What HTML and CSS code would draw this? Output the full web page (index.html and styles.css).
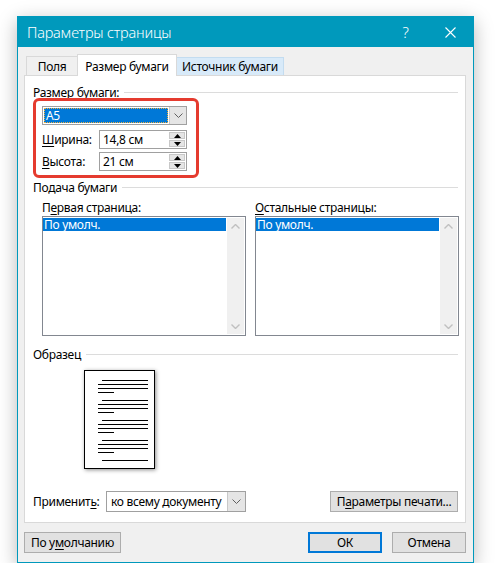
FILE: index.html
```html
<!DOCTYPE html>
<html lang="ru">
<head>
<meta charset="utf-8">
<title>Параметры страницы</title>
<link rel="stylesheet" href="styles.css">
</head>
<body>
<div class="window">
  <div class="titlebar">
    <span class="title">Параметры страницы</span>
    <span class="tb-btn">?</span>
    <span class="tb-btn"><svg width="11" height="11" viewBox="0 0 11 11"><path d="M0.5 0.5L10.5 10.5M10.5 0.5L0.5 10.5" stroke="#fff" stroke-width="1.1" fill="none"/></svg></span>
  </div>
  <div class="body">
    <div class="tabs">
      <div class="tab tab-fields">Поля</div>
      <div class="tab tab-active">Размер бумаги</div>
      <div class="tab tab-hover">Источник бумаги</div>
    </div>
    <div class="panel">
      <div class="group-head"><span>Размер <u>б</u>умаги:</span></div>
      <div class="highlight">
        <div class="combo combo-size">
          <div class="combo-field"><span class="selection">A5</span></div>
          <div class="drop"><svg width="9" height="5" viewBox="0 0 9 5"><path d="M0.5 0.5L4.5 4.5L8.5 0.5" stroke="#606060" fill="none"/></svg></div>
        </div>
        <div class="field-row">
          <span class="field-label"><u>Ш</u>ирина:</span>
          <div class="spin">
            <span class="spin-value">14,8 см</span>
            <div class="spin-btns">
              <span class="spin-btn"><svg width="7" height="4" viewBox="0 0 7 4"><path d="M0 4L3.5 0L7 4Z" fill="#000"/></svg></span>
              <span class="spin-btn"><svg width="7" height="4" viewBox="0 0 7 4"><path d="M0 0L3.5 4L7 0Z" fill="#000"/></svg></span>
            </div>
          </div>
        </div>
        <div class="field-row field-row-2">
          <span class="field-label"><u>В</u>ысота:</span>
          <div class="spin">
            <span class="spin-value">21 см</span>
            <div class="spin-btns">
              <span class="spin-btn"><svg width="7" height="4" viewBox="0 0 7 4"><path d="M0 4L3.5 0L7 4Z" fill="#000"/></svg></span>
              <span class="spin-btn"><svg width="7" height="4" viewBox="0 0 7 4"><path d="M0 0L3.5 4L7 0Z" fill="#000"/></svg></span>
            </div>
          </div>
        </div>
      </div>

      <div class="group-head group-head-2"><span>Подача бумаги</span></div>
      <div class="sources">
        <div class="source-col">
          <div class="col-label">П<u>е</u>рвая страница:</div>
          <div class="listbox">
            <div class="list-items"><div class="list-item">По умолч.</div></div>
            <div class="scrollbar">
              <svg width="9" height="5" viewBox="0 0 9 5"><path d="M0.5 4.5L4.5 0.5L8.5 4.5" stroke="#c0c0c0" stroke-width="1.4" fill="none"/></svg>
              <svg width="9" height="5" viewBox="0 0 9 5"><path d="M0.5 0.5L4.5 4.5L8.5 0.5" stroke="#c0c0c0" stroke-width="1.4" fill="none"/></svg>
            </div>
          </div>
        </div>
        <div class="source-col">
          <div class="col-label"><u>О</u>стальные страницы:</div>
          <div class="listbox">
            <div class="list-items"><div class="list-item">По умолч.</div></div>
            <div class="scrollbar">
              <svg width="9" height="5" viewBox="0 0 9 5"><path d="M0.5 4.5L4.5 0.5L8.5 4.5" stroke="#c0c0c0" stroke-width="1.4" fill="none"/></svg>
              <svg width="9" height="5" viewBox="0 0 9 5"><path d="M0.5 0.5L4.5 4.5L8.5 0.5" stroke="#c0c0c0" stroke-width="1.4" fill="none"/></svg>
            </div>
          </div>
        </div>
      </div>

      <div class="group-head group-head-3"><span>Образец</span></div>
      <div class="sample">
        <svg width="69" height="97" viewBox="0 0 69 97">
          <g fill="#000">
            <rect x="17" y="9" width="46" height="1"/>
            <rect x="13" y="13" width="50" height="1"/>
            <rect x="13" y="17" width="50" height="1"/>
            <rect x="13" y="21" width="16" height="1"/>
            <rect x="17" y="29" width="46" height="1"/>
            <rect x="13" y="33" width="50" height="1"/>
            <rect x="13" y="37" width="50" height="1"/>
            <rect x="13" y="41" width="16" height="1"/>
            <rect x="17" y="49" width="46" height="1"/>
            <rect x="13" y="53" width="50" height="1"/>
            <rect x="13" y="57" width="50" height="1"/>
            <rect x="13" y="61" width="16" height="1"/>
            <rect x="17" y="69" width="46" height="1"/>
            <rect x="13" y="73" width="50" height="1"/>
            <rect x="13" y="77" width="50" height="1"/>
            <rect x="13" y="81" width="16" height="1"/>
            <rect x="17" y="89" width="46" height="1"/>
          </g>
        </svg>
      </div>

      <div class="apply-row">
        <span class="apply-label">Применит<u>ь</u>:</span>
        <div class="combo combo-apply">
          <div class="combo-field">ко всему документу</div>
          <div class="drop"><svg width="9" height="5" viewBox="0 0 9 5"><path d="M0.5 0.5L4.5 4.5L8.5 0.5" stroke="#606060" fill="none"/></svg></div>
        </div>
        <span class="spacer"></span>
        <button class="btn btn-print">П<u>а</u>раметры печати...</button>
      </div>
    </div>

    <div class="footer">
      <button class="btn btn-default">По у<u>м</u>олчанию</button>
      <span class="spacer"></span>
      <button class="btn btn-ok">ОК</button>
      <button class="btn btn-cancel">Отмена</button>
    </div>
  </div>
</div>
</body>
</html>
```
FILE: styles.css
```css
body {
  margin: 0;
  background: #ffffff;
  font-family: "Noto Sans", "Liberation Sans", sans-serif;
  font-size: 12px;
  color: #000;
  letter-spacing: -0.3px;
}

u { text-decoration: underline; text-underline-offset: 2px; }

.window {
  margin: 16px 0 0 17px;
  width: 457px;
  height: 547px;
  box-sizing: border-box;
  border: 1px solid #0099bc;
  background: #f0f0f0;
  box-shadow: 0 5px 18px rgba(0, 0, 0, 0.28);
  display: flex;
  flex-direction: column;
}

.titlebar {
  flex: none;
  height: 30px;
  background: #0099bc;
  color: #fff;
  display: flex;
  align-items: center;
}

.title {
  flex: 1;
  margin-left: 9px;
  font-size: 14.5px;
  font-weight: 300;
  letter-spacing: -0.2px;
}

.tb-btn {
  width: 45px;
  height: 30px;
  display: flex;
  align-items: center;
  justify-content: center;
  font-size: 15px;
  font-weight: 300;
}

.body {
  flex: 1;
  padding: 7px 7px 0 6px;
  display: flex;
  flex-direction: column;
}

.tabs {
  height: 21px;
  display: flex;
  align-items: flex-end;
  padding-left: 2px;
}

.tab {
  box-sizing: border-box;
  border: 1px solid #d9d9d9;
  border-bottom: none;
  line-height: 16px;
  text-align: center;
  white-space: nowrap;
}

.tab-fields {
  width: 52px;
  height: 19px;
  padding-top: 2px;
  background: #f0f0f0;
}

.tab-active {
  width: 100px;
  height: 22px;
  padding-top: 4px;
  margin-left: -1px;
  margin-bottom: -1px;
  background: #fff;
  position: relative;
  z-index: 1;
}

.tab-hover {
  width: 108px;
  height: 18px;
  padding-top: 1px;
  margin-left: -1px;
  background: #d8eaf9;
  border-color: #c3dcf0;
}

.panel {
  flex: none;
  height: 448px;
  box-sizing: border-box;
  border: 1px solid #d9d9d9;
  background: #fff;
  display: flex;
  flex-direction: column;
}

.group-head {
  height: 13px;
  line-height: 13px;
  margin-top: 10px;
  padding: 0 7px 0 8px;
  display: flex;
  align-items: center;
}

.group-head::after {
  content: "";
  flex: 1;
  height: 1px;
  background: #dcdcdc;
  margin-left: 5px;
}

.group-head-2 { margin-top: 3px; }
.group-head-3 { margin-top: 12px; }

.highlight {
  margin: -1px 0 0 8px;
  width: 166px;
  box-sizing: border-box;
  border: 3px solid #e53b2f;
  border-radius: 6px;
  padding: 5px 0 4px 6px;
}

.combo {
  box-sizing: border-box;
  display: flex;
  border: 1px solid #a0a0a0;
  background: #fff;
}

.combo-size {
  width: 145px;
  height: 19px;
}

.combo-field {
  flex: 1;
  padding: 1px;
  display: flex;
  align-items: center;
  white-space: nowrap;
}

.selection {
  flex: 1;
  align-self: stretch;
  box-sizing: border-box;
  background: #0078d7;
  color: #fff;
  border: 1px dotted #f0b040;
  line-height: 13px;
  padding-left: 1px;
}

.drop {
  width: 16px;
  flex: none;
  background: #e5e5e5;
  border-left: 1px solid #c8c8c8;
  display: flex;
  align-items: center;
  justify-content: center;
}

.field-row {
  margin-top: 5px;
  height: 19px;
  display: flex;
  align-items: center;
}

.field-row-2 { margin-top: 3px; }

.field-label {
  width: 57px;
}

.spin {
  width: 88px;
  height: 19px;
  box-sizing: border-box;
  border: 1px solid #a0a0a0;
  background: #fff;
  display: flex;
}

.spin-value {
  flex: 1;
  padding-left: 3px;
  line-height: 17px;
}

.spin-btns {
  width: 16px;
  display: flex;
  flex-direction: column;
  padding: 1px 1px 1px 0;
  gap: 1px;
}

.spin-btn {
  flex: 1;
  background: #e5e5e5;
  border: 1px solid #c8c8c8;
  display: flex;
  align-items: center;
  justify-content: center;
}

.sources {
  margin-top: 7px;
  padding-left: 17px;
  display: flex;
  gap: 9px;
}

.source-col {
  width: 204px;
}

.col-label {
  height: 13px;
  line-height: 13px;
}

.listbox {
  margin-top: 2px;
  height: 120px;
  box-sizing: border-box;
  border: 1px solid #828790;
  display: flex;
}

.list-items {
  flex: 1;
  padding: 1px 1px 0 0;
}

.list-item {
  height: 13px;
  line-height: 13px;
  background: #0078d7;
  color: #fff;
  padding-left: 1px;
}

.scrollbar {
  width: 17px;
  background: #f0f0f0;
  margin: 1px 1px 1px 0;
  display: flex;
  flex-direction: column;
  justify-content: space-between;
  align-items: center;
  padding: 6px 0 5px;
  box-sizing: border-box;
}

.sample {
  margin: 9px 0 0 59px;
  width: 71px;
  height: 99px;
  box-sizing: border-box;
  border: 1px solid #000;
  background: #fff;
  box-shadow: 1px 1px 4px rgba(0, 0, 0, 0.45);
}

.sample svg { display: block; }

.apply-row {
  margin-top: 22px;
  height: 21px;
  padding: 0 7px 0 8px;
  display: flex;
  align-items: center;
}

.apply-label {
  width: 73px;
}

.combo-apply {
  width: 140px;
  height: 21px;
}

.combo-apply .combo-field {
  padding-left: 4px;
}

.combo-apply .drop { width: 17px; }

.spacer { flex: 1; }

.btn {
  box-sizing: border-box;
  height: 21px;
  background: #e1e1e1;
  border: 1px solid #adadad;
  font-family: inherit;
  font-size: 12px;
  letter-spacing: inherit;
  color: #000;
  padding: 0;
}

.btn-print { width: 128px; }

.footer {
  margin-top: 9px;
  display: flex;
}

.btn-default { width: 97px; }

.btn-ok {
  width: 74px;
  margin-right: 10px;
  border: 2px solid #0078d7;
}

.btn-cancel { width: 74px; }
```
